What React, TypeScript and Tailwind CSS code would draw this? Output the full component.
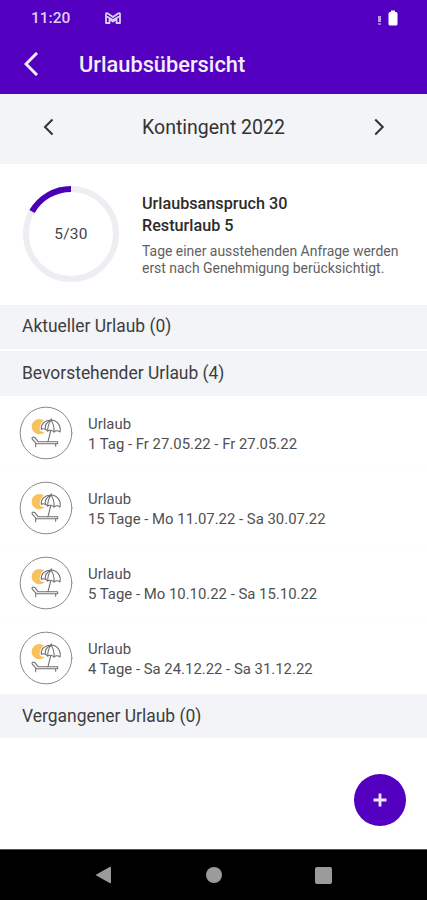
import { ReactNode } from 'react';

interface Vacation {
  days: string;
  range: string;
}

const upcoming: Vacation[] = [
  { days: '1 Tag', range: 'Fr 27.05.22 - Fr 27.05.22' },
  { days: '15 Tage', range: 'Mo 11.07.22 - Sa 30.07.22' },
  { days: '5 Tage', range: 'Mo 10.10.22 - Sa 15.10.22' },
  { days: '4 Tage', range: 'Sa 24.12.22 - Sa 31.12.22' },
];

// Sun, parasol and deck chair inside a thin ring
function VacationIcon() {
  return (
    <svg viewBox="0 0 162 162" className="w-[54px] h-[54px] shrink-0" fill="none" strokeLinecap="round" strokeLinejoin="round">
      <circle cx="81" cy="81" r="77.5" stroke="#8b8b8b" strokeWidth="3" fill="#fff" />
      <circle cx="61" cy="62" r="23" fill="#f7c15c" />
      <path d="M67 71 C66 54 79 42 96 42 C114 45 125 59 121 79 L105 79 L87 76 Z" fill="#fff" stroke="#fff" strokeWidth="10" />
      <g stroke="#6f6f6f" strokeWidth="3.2">
        <path d="M67 70 C65 54 78 42 96 42 C114 43 127 58 123 78 C118 74 110 74 105 78 C100 72 91 71 86 75 C81 69 72 66 67 70 Z" />
        <path d="M96 42 C84 48 77 57 79 69 M96 42 C89 52 86 62 86 75 M96 42 C103 52 106 65 105 78 M97 38 V42" />
        <path d="M95 75 L87 107" />
        <path d="M39 97 Q39 93 43 93 L48 95 L57 107 H116 V113 H52 L41 101 Q39 100 39 97 Z M50 113 V122 M110 113 V121" />
      </g>
    </svg>
  );
}

function Chevron({ points, className }: { points: string; className: string }) {
  return (
    <svg viewBox="0 0 14 24" className={className} fill="none" stroke="currentColor">
      <polyline points={points} />
    </svg>
  );
}

function QuotaRing() {
  return (
    <div className="relative w-24 h-24 shrink-0">
      <svg viewBox="0 0 96 96" className="w-24 h-24" fill="none" strokeWidth="6">
        <circle cx="48" cy="48" r="45" stroke="#edeef2" />
        <path d="M9 25.5 A45 45 0 0 1 48 3" stroke="#4b00b8" />
      </svg>
      <span className="absolute inset-0 flex items-center justify-center pt-0.5 text-[15.5px] tracking-[0.3px] text-[#444]">5/30</span>
    </div>
  );
}

function SectionHeader({ className, children }: { className: string; children: ReactNode }) {
  return (
    <h2 className={`flex items-center bg-[#f3f4f8] pl-[22px] text-[17.45px] text-[#3e3e40] ${className}`}>{children}</h2>
  );
}

export default function App() {
  return (
    <div className="w-[427px] h-[900px] flex flex-col overflow-hidden bg-white font-['Roboto',sans-serif] whitespace-nowrap">
      <header className="h-[94px] shrink-0 bg-[#5300c1] text-[#f4eefc]">
        <div className="h-9 flex items-center pl-[31px] pr-[29px]">
          <span className="w-[74px] pt-0.5 text-[15.5px] font-medium text-[#ddcdf5]">11:20</span>
          <svg viewBox="0 0 16 12" className="w-4 h-3" fill="none" stroke="#ddcdf5" strokeLinejoin="round">
            <path d="M1 11 V2 Q1 1 2.5 1.3 L8 5 L13.5 1.3 Q15 1 15 2 V11 H11.5 V7 L8 9.5 L4.5 7 V11 Z M1 4 L8 8 L15 4" strokeWidth="1.8" />
          </svg>
          <span className="ml-auto mt-1 w-[3px] h-[9px] flex flex-col justify-between">
            <span className="w-[3px] h-1.5 bg-[#b99be8]" />
            <span className="w-[3px] h-0.5 bg-[#9870dc]" />
          </span>
          <svg viewBox="0 0 10 16" className="ml-[7px] w-2.5 h-4" fill="#fff">
            <path d="M3 0.5 H7 V2 H8 Q9.5 2 9.5 3.5 V14 Q9.5 15.5 8 15.5 H2 Q0.5 15.5 0.5 14 V3.5 Q0.5 2 2 2 H3 Z" />
          </svg>
        </div>
        <div className="h-14 flex items-center pl-6">
          <Chevron points="13,1 2,12 13,23" className="w-3.5 h-6 stroke-[3]" />
          <h1 className="ml-[41px] pt-[3px] text-[21.8px] font-medium">Urlaubsübersicht</h1>
        </div>
      </header>

      <div className="h-[70px] shrink-0 flex items-center justify-between bg-[#f3f4f8] px-[42px] pb-1 text-[#333]">
        <Chevron points="13,2 3,12 13,22" className="w-3 h-[18px] stroke-[2.7]" />
        <span className="pt-px text-[19.5px]">Kontingent 2022</span>
        <Chevron points="2,2 12,12 2,22" className="w-3 h-[18px] stroke-[2.7]" />
      </div>

      <section className="h-[141px] shrink-0 flex pl-[23px] pt-[22px]">
        <QuotaRing />
        <div className="ml-[23px] pt-[7px]">
          <p className="text-[16.2px] leading-[22px] font-medium text-[#2c2c2c]">Urlaubsanspruch 30</p>
          <p className="text-[16.2px] leading-[22px] font-medium text-[#2c2c2c]">Resturlaub 5</p>
          <p className="mt-1.5 text-[13.95px] leading-[17px] text-[#616161]">
            Tage einer ausstehenden Anfrage werden
            <br />
            erst nach Genehmigung berücksichtigt.
          </p>
        </div>
      </section>

      <SectionHeader className="h-11 shrink-0 pb-0.5">Aktueller Urlaub (0)</SectionHeader>
      <SectionHeader className="mt-0.5 h-[45px] shrink-0">Bevorstehender Urlaub (4)</SectionHeader>

      <ul className="h-[298px] shrink-0 flex flex-col divide-y divide-[#fcfcfc]">
        {upcoming.map((item) => (
          <li key={item.range} className="flex-1 flex items-center pl-[19px] pt-px">
            <VacationIcon />
            <div className="ml-[15px] pt-0.5 text-[14.9px] leading-5 text-[#505050]">
              <p>Urlaub</p>
              <p>
                {item.days} - {item.range}
              </p>
            </div>
          </li>
        ))}
      </ul>

      <SectionHeader className="h-11 shrink-0">Vergangener Urlaub (0)</SectionHeader>

      <div className="flex-1 flex items-end justify-end pr-[21px] pb-[23px]">
        <button className="w-[52px] h-[52px] rounded-full bg-[#5300c1] flex items-center justify-center">
          <svg viewBox="0 0 14 14" className="w-3.5 h-3.5" stroke="#eee5fb" strokeWidth="2.8">
            <path d="M7 0.5 V13.5 M0.5 7 H13.5" />
          </svg>
        </button>
      </div>

      <nav className="h-[51px] shrink-0 flex items-center bg-black border-t border-[#555] text-[#9b9b9b]">
        <svg viewBox="0 0 16 18" className="ml-[95px] w-4 h-[18px]" fill="currentColor">
          <path d="M0.5 9 L15 0.7 Q16 0.5 16 1.5 V16.5 Q16 17.5 15 17.3 Z" />
        </svg>
        <span className="ml-[95px] w-4 h-4 rounded-full bg-[#9b9b9b]" />
        <span className="ml-[93px] w-[17px] h-[17px] rounded-xs bg-[#9b9b9b]" />
      </nav>
    </div>
  );
}
